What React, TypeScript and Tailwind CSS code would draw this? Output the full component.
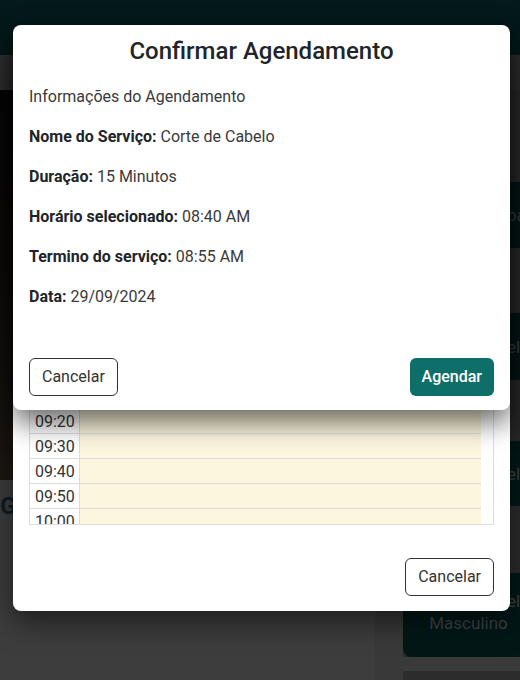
import React from "react"

const slots = ["09:20", "09:30", "09:40", "09:50", "10:00"]

const details: [string, string][] = [
  ["Nome do Serviço:", "Corte de Cabelo"],
  ["Duração:", "15 Minutos"],
  ["Horário selecionado:", "08:40 AM"],
  ["Termino do serviço:", "08:55 AM"],
  ["Data:", "29/09/2024"],
]

function ServiceCard({ title, sub, className }: { title: string; sub?: string; className: string }) {
  return (
    <div className={`flex flex-col items-center justify-center overflow-hidden whitespace-nowrap rounded-l-lg bg-[#031717] pl-[14px] text-[17px] leading-[22px] text-[#3c4546] ${className}`}>
      <span className="pl-[70px]">{title}</span>
      {sub && <span>{sub}</span>}
    </div>
  )
}

export default function App() {
  return (
    <div className="relative h-[680px] w-[520px] overflow-hidden bg-[#3d3d3d] font-['Roboto',sans-serif]">
      {/* page behind the dialogs (already dimmed) */}
      <header className="h-[55px] bg-[#03191a]" />
      <div className="h-[35px] bg-[#313131]" />
      <div className="flex">
        <div className="w-[375px] shrink-0">
          <div className="h-[390px] bg-gradient-to-b from-[#060505] via-[#0f0c0a] to-[#1c1713]" />
          <h2 className="mt-[12px] text-[24px] leading-[28px] font-bold text-[#0e1b27]">Galeria</h2>
        </div>
        <div className="h-[590px] w-[28px] shrink-0 bg-[#393939]" />
        <div className="flex min-w-0 flex-1 flex-col bg-[#2c2c2c] pt-[92px]">
          <ServiceCard title="Barba" className="h-[66px]" />
          <div className="h-[65px]" />
          <ServiceCard title="Cabelo" className="h-[67px]" />
          <div className="h-[61px]" />
          <ServiceCard title="Cabelo" className="h-[65px]" />
          <div className="h-[67px]" />
          <ServiceCard title="Cabelo" sub="Masculino" className="h-[84px] pb-[6px]" />
          <div className="h-[14px] bg-[#3a3a3a]" />
        </div>
      </div>

      {/* first dialog: time table */}
      <div className="absolute left-[13px] top-[40px] flex h-[571px] w-[497px] flex-col rounded-lg bg-white px-4 shadow-[0_10px_30px_rgba(0,0,0,0.55)]">
        <div className="mt-[369px] h-[116px] overflow-hidden border-x border-b border-[#dedede]">
          <div className="mr-[12px]">
            {slots.map((t) => (
              <div key={t} className="flex h-[25px] border-b border-[#dcdcdc]">
                <div className="w-[50px] border-r border-[#dcdcdc] pl-[5px] text-[16px] leading-[26px] text-[#333]">{t}</div>
                <div className="flex-1 bg-[#fdf6df]" />
              </div>
            ))}
          </div>
        </div>
        <div className="mt-[33px] flex justify-end">
          <button className="h-[38px] rounded-md border border-[#333] px-3 text-[16px] text-[#333]">Cancelar</button>
        </div>
      </div>

      {/* confirmation dialog */}
      <div className="absolute left-[13px] top-[25px] flex h-[385px] w-[497px] flex-col rounded-lg bg-white px-4 pt-[10px] shadow-[0_12px_28px_rgba(0,0,0,0.6)]">
        <h1 className="text-center text-[24px] leading-[32px] font-medium text-[#212529]">Confirmar Agendamento</h1>
        <p className="mt-[18px] text-[16px] leading-[24px] text-[#3a3a3a]">Informações do Agendamento</p>
        <div className="flex flex-col gap-4 pt-4 text-[16px] leading-[24px] text-[#3a3a3a]">
          {details.map(([label, value]) => (
            <p key={label}>
              <span className="font-bold text-[#212529]">{label}</span> {value}
            </p>
          ))}
        </div>
        <div className="mt-[49px] flex justify-between">
          <button className="h-[38px] rounded-md border border-[#333] px-3 text-[16px] text-[#333]">Cancelar</button>
          <button className="h-[38px] rounded-md bg-[#0e6e68] px-3 text-[16px] font-medium text-white">Agendar</button>
        </div>
      </div>
    </div>
  )
}
